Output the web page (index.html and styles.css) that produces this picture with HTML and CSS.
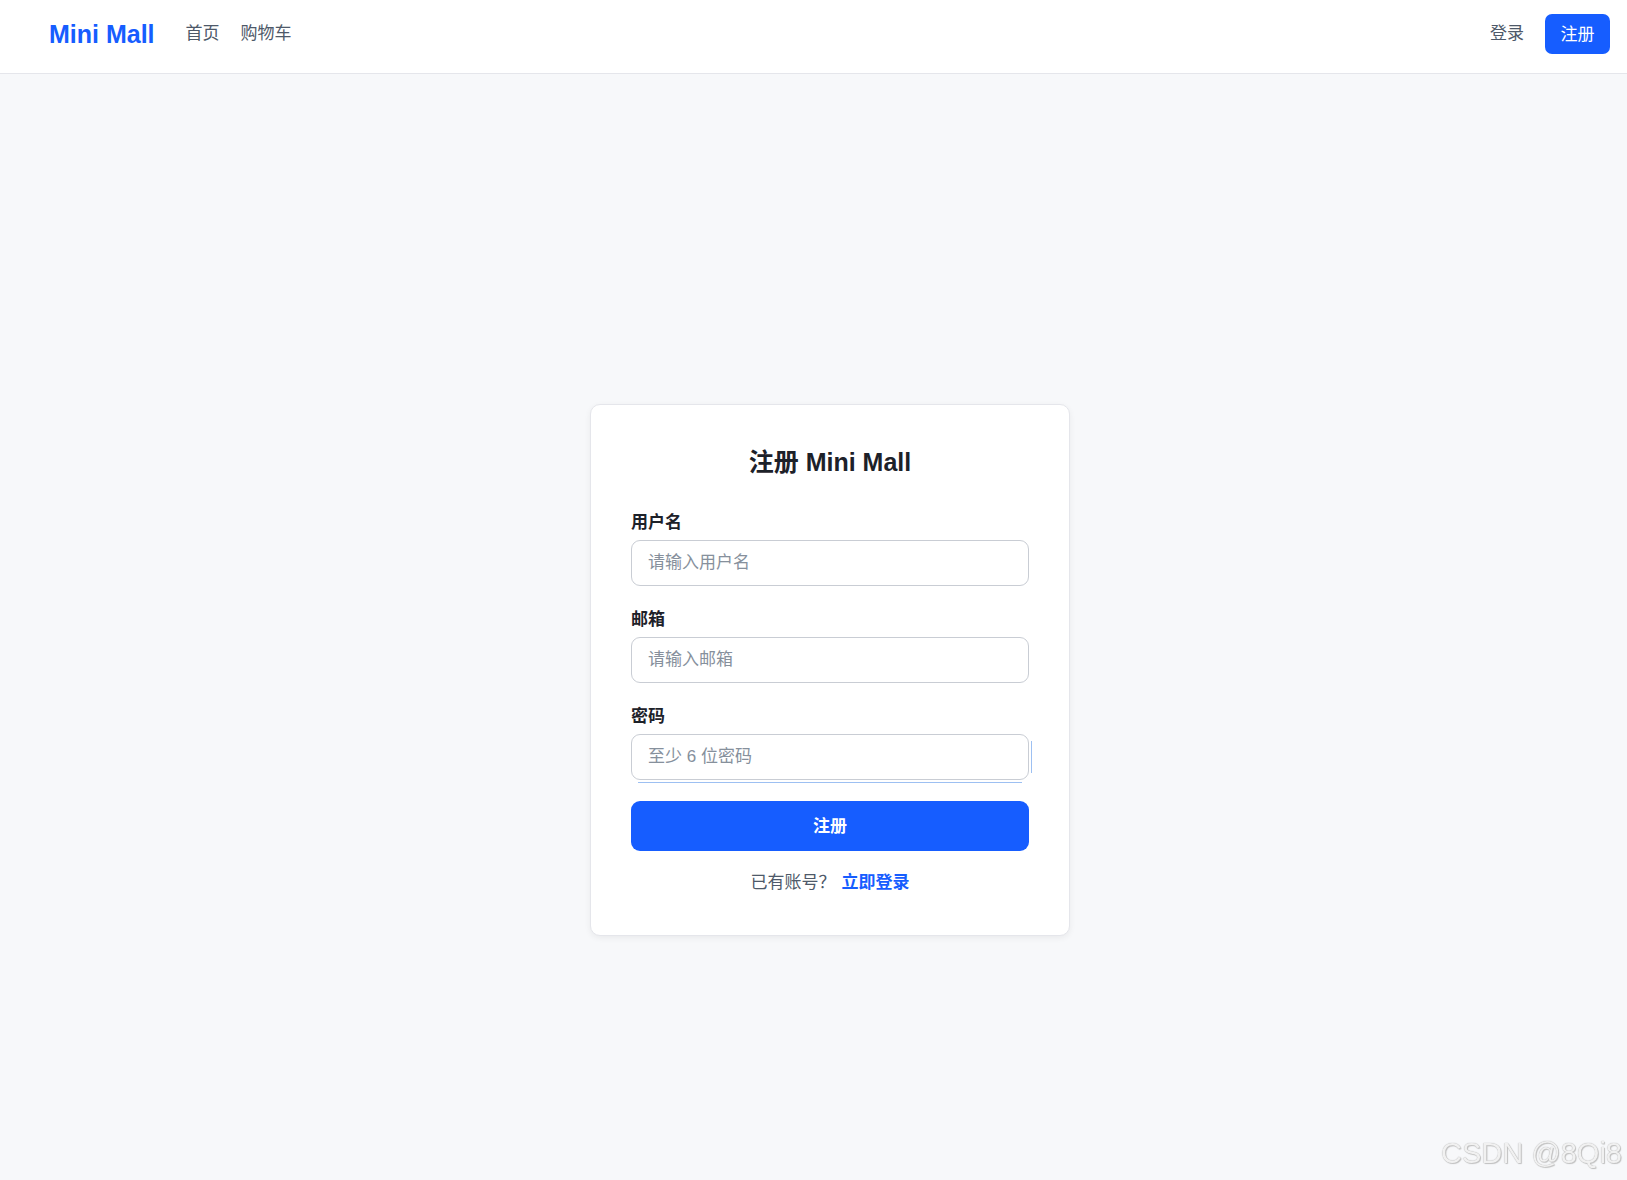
FILE: index.html
```html
<!DOCTYPE html>
<html lang="zh-CN">
<head>
<meta charset="utf-8">
<title>注册 - Mini Mall</title>
<link rel="stylesheet" href="styles.css">
</head>
<body>
<div class="page">
  <header class="topbar">
    <a class="brand" href="#">Mini Mall</a>
    <nav class="nav">
      <a href="#">首页</a>
      <a href="#">购物车</a>
    </nav>
    <div class="account">
      <a class="link-login" href="#">登录</a>
      <a class="btn-register" href="#">注册</a>
    </div>
  </header>

  <main class="main">
    <form class="card">
      <h1 class="card-title">注册 Mini Mall</h1>

      <div class="field">
        <label class="field-label" for="username">用户名</label>
        <input class="field-input" id="username" type="text" placeholder="请输入用户名">
      </div>

      <div class="field">
        <label class="field-label" for="email">邮箱</label>
        <input class="field-input" id="email" type="email" placeholder="请输入邮箱">
      </div>

      <div class="field field-last">
        <label class="field-label" for="password">密码</label>
        <div class="pw-wrap">
          <input class="field-input" id="password" type="password" placeholder="至少 6 位密码">
        </div>
      </div>

      <button class="btn-submit" type="button">注册</button>

      <p class="card-foot">已有账号？<a href="#">立即登录</a></p>
    </form>
  </main>
</div>
<div class="watermark">CSDN @8Qi8</div>
</body>
</html>
```

FILE: styles.css
```css
html, body {
  margin: 0;
  padding: 0;
  overflow: hidden;
}

body {
  font-family: "Liberation Sans", "Noto Sans CJK SC", sans-serif;
  color: #1d2129;
  background: #f7f8fa;
}

a {
  text-decoration: none;
}

.page {
  width: 1660px;
  min-height: 1180px;
  background: #f7f8fa;
}

/* top navigation */
.topbar {
  display: flex;
  align-items: center;
  height: 67px;
  padding: 0 50px 6px 49px;
  background: #ffffff;
  border-bottom: 1px solid #e5e6eb;
}

.brand {
  font-size: 25px;
  font-weight: 700;
  color: #165dff;
  line-height: 30px;
}

.nav {
  display: flex;
  gap: 21px;
  margin-left: 31px;
}

.nav a {
  font-size: 17px;
  line-height: 24px;
  color: #4e5969;
}

.account {
  display: flex;
  align-items: center;
  gap: 21px;
  margin-left: auto;
}

.link-login {
  font-size: 17px;
  line-height: 24px;
  color: #4e5969;
}

.btn-register {
  display: flex;
  align-items: center;
  box-sizing: border-box;
  height: 40px;
  padding: 0 15.5px 3px;
  border-radius: 7px;
  background: #165dff;
  color: #ffffff;
  font-size: 17px;
}

/* register card */
.main {
  display: flex;
  justify-content: center;
  padding-top: 330px;
}

.card {
  box-sizing: border-box;
  width: 480px;
  padding: 40px;
  background: #ffffff;
  border: 1px solid #e5e6eb;
  border-radius: 10px;
  box-shadow: 0 2px 6px rgba(0, 0, 0, 0.06);
}

.card-title {
  margin: 0 0 32px;
  font-size: 25px;
  line-height: 34px;
  font-weight: 700;
  text-align: center;
  color: #1d2129;
}

.field {
  margin-bottom: 22px;
}

.field-last {
  margin-bottom: 21px;
}

.field-label {
  display: block;
  margin-bottom: 5px;
  font-size: 17px;
  line-height: 24px;
  font-weight: 600;
  color: #1d2129;
}

.field-input {
  display: block;
  box-sizing: border-box;
  width: 100%;
  height: 46px;
  padding: 0 16px;
  border: 1px solid #c9cdd4;
  border-radius: 9px;
  background: #ffffff;
  font-family: inherit;
  font-size: 17px;
  color: #1d2129;
  outline: none;
}

.field-input::placeholder {
  color: #86909c;
}

/* autofill highlight drawn around the password box */
.pw-wrap {
  position: relative;
}

.pw-wrap::before {
  content: "";
  position: absolute;
  left: 7px;
  right: 7px;
  bottom: -3px;
  height: 1px;
  background: #9dc0f2;
}

.pw-wrap::after {
  content: "";
  position: absolute;
  right: -3px;
  top: 7px;
  bottom: 7px;
  width: 1px;
  background: #9dc0f2;
}

.btn-submit {
  display: block;
  width: 100%;
  height: 50px;
  margin: 0;
  padding: 0 0 4px;
  border: none;
  border-radius: 9px;
  background: #165dff;
  color: #ffffff;
  font-family: inherit;
  font-size: 17px;
  font-weight: 700;
  cursor: pointer;
}

.card-foot {
  margin: 20px 0 0;
  font-size: 17px;
  line-height: 24px;
  text-align: center;
  color: #4e5969;
}

.card-foot a {
  margin-left: 6px;
  color: #165dff;
  font-weight: 600;
}

.watermark {
  position: fixed;
  right: 5px;
  bottom: 10px;
  font-family: "Liberation Sans", sans-serif;
  font-size: 29px;
  color: #f1f1f1;
  text-shadow: 0 0 1px #9a9a9a, 1px 1px 1px #c4c4c4;
  pointer-events: none;
}
```
